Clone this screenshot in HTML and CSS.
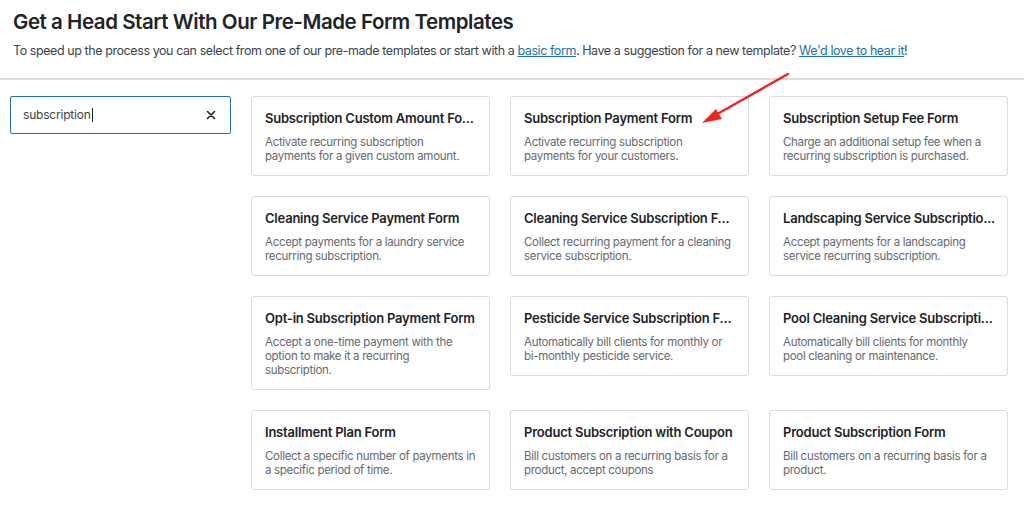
FILE: index.html
```html
<!DOCTYPE html>
<html lang="en">
<head>
<meta charset="utf-8">
<title>Form Templates</title>
<link rel="stylesheet" href="styles.css">
</head>
<body>
<header class="header">
  <h1 class="title">Get a Head Start With Our Pre-Made Form Templates</h1>
  <p class="subtitle">To speed up the process you can select from one of our pre-made templates or start with a <a href="#">basic form</a>. Have a suggestion for a new template? <a href="#">We'd love to hear it</a>!</p>
</header>
<main class="main">
  <aside class="sidebar">
    <div class="search">
      <span class="search-text">subscription</span><span class="caret"></span>
      <svg class="clear" width="10" height="10" viewBox="0 0 10 10"><path d="M1.5 1.5 L8.5 8.5 M8.5 1.5 L1.5 8.5" stroke="#1d2327" stroke-width="1.6" stroke-linecap="round"/></svg>
    </div>
  </aside>
  <section class="grid">
    <div class="card"><h3 class="card-title">Subscription Custom Amount Fo...</h3><p class="card-desc">Activate recurring subscription payments for a given custom amount.</p></div>
    <div class="card"><h3 class="card-title">Subscription Payment Form</h3><p class="card-desc">Activate recurring subscription payments for your customers.</p></div>
    <div class="card"><h3 class="card-title">Subscription Setup Fee Form</h3><p class="card-desc">Charge an additional setup fee when a recurring subscription is purchased.</p></div>
    <div class="card"><h3 class="card-title">Cleaning Service Payment Form</h3><p class="card-desc">Accept payments for a laundry service recurring subscription.</p></div>
    <div class="card"><h3 class="card-title">Cleaning Service Subscription F...</h3><p class="card-desc">Collect recurring payment for a cleaning service subscription.</p></div>
    <div class="card"><h3 class="card-title">Landscaping Service Subscriptio...</h3><p class="card-desc">Accept payments for a landscaping service recurring subscription.</p></div>
    <div class="card"><h3 class="card-title">Opt-in Subscription Payment Form</h3><p class="card-desc">Accept a one-time payment with the option to make it a recurring subscription.</p></div>
    <div class="card"><h3 class="card-title">Pesticide Service Subscription F...</h3><p class="card-desc">Automatically bill clients for monthly or bi-monthly pesticide service.</p></div>
    <div class="card"><h3 class="card-title">Pool Cleaning Service Subscripti...</h3><p class="card-desc">Automatically bill clients for monthly<br>pool cleaning or maintenance.</p></div>
    <div class="card"><h3 class="card-title">Installment Plan Form</h3><p class="card-desc">Collect a specific number of payments in a specific period of time.</p></div>
    <div class="card"><h3 class="card-title">Product Subscription with Coupon</h3><p class="card-desc">Bill customers on a recurring basis for a product, accept coupons</p></div>
    <div class="card"><h3 class="card-title">Product Subscription Form</h3><p class="card-desc">Bill customers on a recurring basis for a product.</p></div>
  </section>
</main>
<svg class="arrow" width="1024" height="507" viewBox="0 0 1024 507">
  <line x1="788" y1="74" x2="712" y2="117" stroke="#f2231f" stroke-width="2.4" stroke-linecap="round"/>
  <polygon points="702,123 716,109 722,119" fill="#f2231f"/>
</svg>
</body>
</html>
```

FILE: styles.css
```css
* { box-sizing: border-box; }
html, body { margin: 0; padding: 0; background: #fff; }
body {
  font-family: Inter, "Noto Sans", "Liberation Sans", sans-serif;
  color: #1d2327;
  width: 1024px;
  height: 507px;
  overflow: hidden;
  position: relative;
}
.header {
  padding: 8px 13px 0;
  height: 80px;
  border-bottom: 2px solid #dcdcde;
}
.title {
  margin: 0;
  font-size: 20.5px;
  line-height: 28px;
  font-weight: 600;
  letter-spacing: -0.45px;
  color: #1d2327;
}
.subtitle {
  margin: 6px 0 0;
  font-size: 12.5px;
  line-height: 18px;
  letter-spacing: -0.42px;
  color: #3c434a;
}
.subtitle a { color: #2271b1; text-decoration: underline; }
.main {
  display: flex;
  gap: 20px;
  padding: 16px 0 0 10px;
}
.sidebar { width: 221px; flex: none; }
.search {
  height: 38px;
  border: 1.5px solid #2271b1;
  border-radius: 2px;
  display: flex;
  align-items: center;
  padding: 0 14px 0 12px;
  font-size: 12px;
  letter-spacing: -0.2px;
  color: #3c434a;
}
.search-text { line-height: 16px; }
.caret { display: inline-block; width: 1px; height: 14px; background: #1d2327; margin-left: 1px; }
.clear { margin-left: auto; }
.grid {
  display: grid;
  grid-template-columns: repeat(3, 239px);
  column-gap: 20px;
  row-gap: 20px;
  align-items: start;
}
.card {
  border: 1px solid #dcdcde;
  border-radius: 3px;
  padding: 12px 12px 12px 13px;
}
.card-title {
  margin: 0;
  font-size: 13px;
  line-height: 18px;
  font-weight: 600;
  letter-spacing: -0.22px;
  color: #1d2327;
  white-space: nowrap;
}
.card-desc {
  margin: 8px 0 0;
  font-size: 11.5px;
  line-height: 14px;
  letter-spacing: -0.3px;
  color: #646970;
}
.arrow { position: absolute; left: 0; top: 0; pointer-events: none; }
```
